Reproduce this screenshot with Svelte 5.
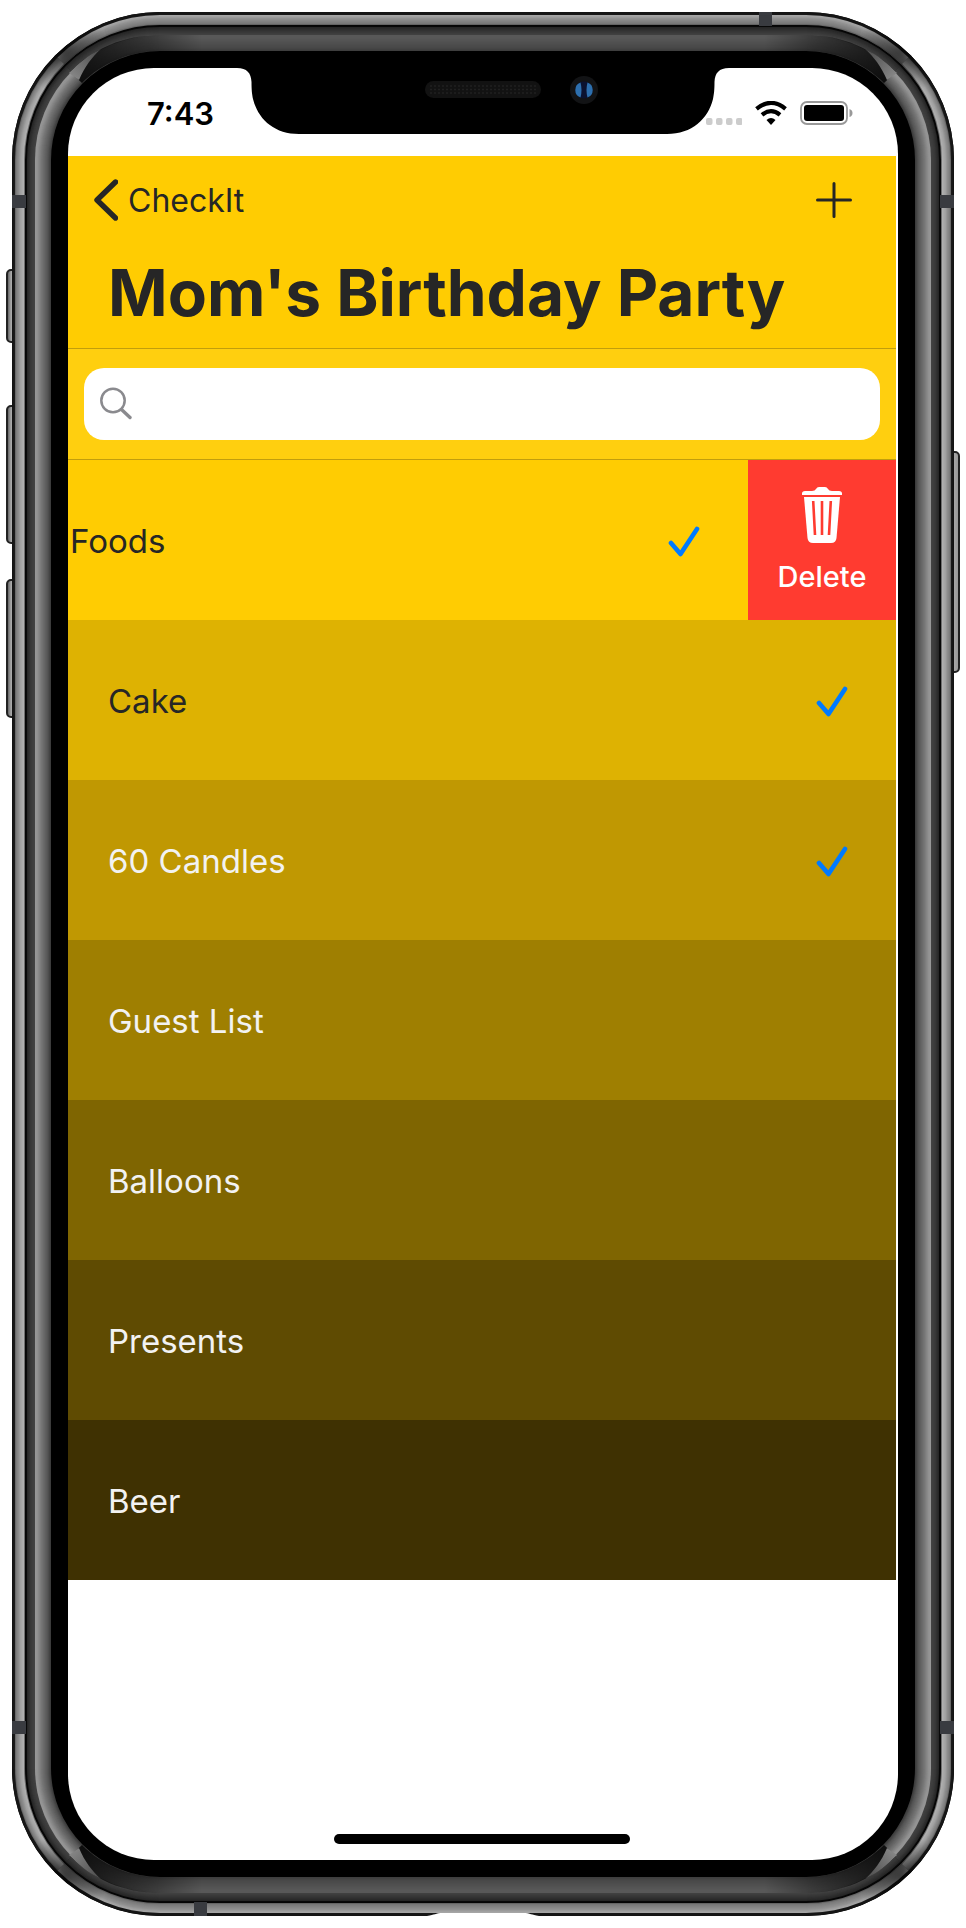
<script>
  let query = $state('');
  let items = $state([
    { name: 'Foods', done: true, swiped: true, color: '#ffcc02' },
    { name: 'Cake', done: true, color: '#deb202' },
    { name: '60 Candles', done: true, light: true, color: '#c09802' },
    { name: 'Guest List', done: false, light: true, color: '#9f7f01' },
    { name: 'Balloons', done: false, light: true, color: '#7f6501' },
    { name: 'Presents', done: false, light: true, color: '#5f4b02' },
    { name: 'Beer', done: false, light: true, color: '#3f3102' }
  ]);

  // Bezel layers from the outside in: [depth, side grey, top/bottom grey]
  const layers = [
    [0, 20, 20], [2, 26, 22], [3, 105, 165], [4, 125, 160], [6, 140, 145],
    [8, 160, 135], [11, 175, 120], [12, 110, 100], [13, 5, 5], [14, 8, 8],
    [15, 38, 38], [18, 55, 50], [22, 66, 64], [23, 150, 88], [25, 145, 88],
    [29, 118, 82], [35, 85, 72], [38, 60, 62], [39, 0, 0]
  ];
  const corners = ['tl', 'tr', 'bl', 'br'];

  function shade(depth, column) {
    let i = layers.length - 1;
    while (layers[i][0] > depth) i--;
    const from = layers[i];
    const to = layers[i + 1];
    if (!to) return from[column];
    const t = (depth - from[0]) / (to[0] - from[0]);
    return Math.round(from[column] + (to[column] - from[column]) * t);
  }

  const rings = Array.from({ length: 40 }, (_, depth) => {
    const side = shade(depth, 1);
    const end = shade(depth, 2);
    return { depth, side: `rgb(${side},${side},${side})`, end: `rgb(${end},${end},${end})` };
  });
</script>

<main class="stage">
  <div class="device">
    <i class="key key-mute"></i>
    <i class="key key-up"></i>
    <i class="key key-down"></i>
    <i class="key key-power"></i>
    <div class="bezel" aria-hidden="true">
      {#each rings as r}
        <i
          class="ring"
          style="inset:{r.depth}px;border-radius:{148 - r.depth}px;border-color:{r.end} {r.side}"
        ></i>
      {/each}
      {#each corners as corner}
        <svg class="corner {corner}" width="200" height="200" viewBox="0 0 200 200">
          <defs>
            <linearGradient id="fade-{corner}" gradientUnits="userSpaceOnUse" x1="70" y1="0" x2="190" y2="0">
              <stop offset="0" stop-color="#000" stop-opacity=".8" />
              <stop offset="1" stop-color="#000" stop-opacity="0" />
            </linearGradient>
            <radialGradient id="spot-{corner}">
              <stop offset="0" stop-color="#000" stop-opacity=".65" />
              <stop offset="1" stop-color="#000" stop-opacity="0" />
            </radialGradient>
            <linearGradient id="glint-{corner}" gradientUnits="userSpaceOnUse" x1="56" y1="66" x2="88" y2="37">
              <stop offset="0" stop-color="#8c8c8c" />
              <stop offset="1" stop-color="#4a4a4a" />
            </linearGradient>
            <clipPath id="rim-{corner}"><path d="M0 148A148 148 0 0 1 148 0V13A135 135 0 0 0 13 148Z" /></clipPath>
          </defs>
          <path d="M58 60C80 37 112 23 148 23H200V39H148C118 39 90 51 70 71Z" fill="url(#fade-{corner})" />
          <path d="M57 61C66 52 76 43 89 37C80 45 73 54 67 68Z" fill="url(#glint-{corner})" />
          <circle cx="52" cy="38" r="44" fill="url(#spot-{corner})" clip-path="url(#rim-{corner})" />
        </svg>
      {/each}
      <i class="gap side left upper"></i>
      <i class="gap side right upper"></i>
      <i class="gap side left lower"></i>
      <i class="gap side right lower"></i>
      <i class="gap end top"></i>
      <i class="gap end bottom"></i>
      <svg class="scoop" viewBox="0 0 112 3"><path d="M0 3C8 2 8 0 16 0H96C104 0 104 2 112 3Z" fill="#fff" /></svg>
    </div>

    <div class="screen">
      <svg class="notch" viewBox="0 0 486 66" aria-hidden="true">
        <path d="M-3 0C7 0 11 5 11.500 14C11.500 22 12 26 13 31C18 51 34 66 59 66H427C452 66 468 51 473 31C474 26 474.500 22 474.500 14C475 5 479 0 489 0Z" />
        <rect x="185" y="13" width="116" height="17" rx="8.500" fill="#121212" />
        <path d="M190 18H296M190 21.500H296M190 25H296" stroke="#202020" stroke-width="1.500" stroke-dasharray="2 2" />
        <circle cx="344" cy="22" r="14" fill="#121315" />
        <circle cx="344" cy="22" r="8.500" fill="#0b1230" />
        <path d="M340.500 14.500a8 8 0 0 0 0 15q2-7.500 0-15ZM347.500 14.500a8 8 0 0 1 0 15q-2-7.500 0-15Z" fill="#2d6fae" />
      </svg>

      <header class="status">
        <time>7:43</time>
        <div class="signals">
          <svg width="36" height="24" viewBox="0 0 36 24" aria-label="Signal">
            <g fill="#ccc">
              <rect y="17" width="6.500" height="7" rx="2" /><rect x="10" y="17" width="6.500" height="7" rx="2" />
              <rect x="20" y="17" width="6.500" height="7" rx="2" /><rect x="30" y="17" width="6.500" height="7" rx="2" />
            </g>
          </svg>
          <svg width="32" height="24" viewBox="0 0 32 24" aria-label="Wi-Fi">
            <path d="M1.500 7.800Q16-4 30.500 7.800M7 13.800Q16 6.500 25 13.800" fill="none" stroke="#000" stroke-width="4.200" />
            <path d="M11.500 19Q16 15.200 20.500 19L16 24Z" />
          </svg>
          <svg width="53" height="24" viewBox="0 0 53 24" aria-label="Battery">
            <rect x="1" y="1" width="46" height="22" rx="6" fill="none" stroke="#999" stroke-width="1.800" />
            <rect x="4" y="4" width="40" height="16" rx="3" />
            <path d="M49.500 8Q52.500 9 52.500 12T49.500 16Z" fill="#999" />
          </svg>
        </div>
      </header>

      <nav class="bar">
        <a class="back" href="#lists">
          <svg width="24" height="42" viewBox="0 0 24 42" aria-hidden="true"><path d="M21.500 3L3 21L21.500 39" fill="none" stroke="#262626" stroke-width="5.400" stroke-linecap="round" stroke-linejoin="round" /></svg>
          <span>CheckIt</span>
        </a>
        <button class="add" aria-label="Add item">
          <svg width="36" height="36" viewBox="0 0 36 36"><path d="M18 1.500V34.500M1.500 18H34.500" stroke="#262626" stroke-width="3" stroke-linecap="round" /></svg>
        </button>
      </nav>
      <h1>Mom's Birthday Party</h1>

      <div class="search">
        <label class="field">
          <svg width="32" height="34" viewBox="0 0 32 34" aria-hidden="true"><g fill="none" stroke="#8a8a8e"><circle cx="13" cy="13.500" r="11.700" stroke-width="2.500" /><path d="M21.500 22.500L30 30.500" stroke-width="3.400" stroke-linecap="round" /></g></svg>
          <input type="search" aria-label="Search" bind:value={query} />
        </label>
      </div>

      <ul>
        {#each items as item}
          <li class:swiped={item.swiped} class:light={item.light} style="background:{item.color}">
            <button class="item" aria-pressed={item.done} onclick={() => (item.done = !item.done)}>
              <span>{item.name}</span>
              {#if item.done}
                <svg width="32" height="32" viewBox="0 0 32 32" aria-hidden="true"><path d="M3 18L12.500 29L29 4" fill="none" stroke="#007aff" stroke-width="4.600" stroke-linecap="round" stroke-linejoin="round" /></svg>
              {/if}
            </button>
            {#if item.swiped}
              <button class="delete">
                <svg width="40" height="56" viewBox="0 0 40 56" aria-hidden="true">
                  <path d="M0 8V6.500Q0 4 3 4H10Q13 4 14 2Q15 0 17 0H23Q25 0 26 2Q27 4 30 4H37Q40 4 40 6.500V8Z" fill="#fff" />
                  <path d="M2 10H38L34.500 51Q34 56 29 56H11Q6 56 5.500 51Z" fill="#fff" />
                  <path d="M11.200 14L13 48M20 14V48M28.800 14L27 48" stroke="#ff3b30" stroke-width="2.600" />
                </svg>
                <span>Delete</span>
              </button>
            {/if}
          </li>
        {/each}
      </ul>

      <div class="home"></div>
    </div>
  </div>
</main>

<style>
  :global(body) { background: #fff; }
  * { box-sizing: border-box; }
  .stage {
    padding: 12px;
    font-family: Inter, Roboto, sans-serif;
    color: #262626;
  }
  .device {
    position: relative;
    display: flex;
    min-height: calc(100vh - 24px);
    padding: 56px;
  }
  .bezel { position: absolute; inset: 0; border-radius: 148px; background: #000; }
  .ring { position: absolute; border: 2px solid; }
  .corner { position: absolute; }
  .tl { top: 0; left: 0; }
  .tr { top: 0; right: 0; transform: scaleX(-1); }
  .bl { bottom: 0; left: 0; transform: scaleY(-1); }
  .br { bottom: 0; right: 0; transform: scale(-1); }
  .gap { position: absolute; background: #393b40; }
  .side { width: 14px; height: 13px; }
  .end { width: 13px; height: 14px; }
  .left { left: 0; }
  .right { right: 0; }
  .upper { top: 183px; }
  .lower { bottom: 182px; }
  .top { top: 0; right: 182px; }
  .bottom { bottom: 0; left: 182px; }
  .scoop { position: absolute; bottom: 0; left: 50%; width: 112px; height: 3px; transform: translateX(-50%); }
  .key {
    position: absolute;
    left: -6px;
    width: 12px;
    border: 2px solid #222;
    border-radius: 5px;
    background: linear-gradient(to right, #666, #aaa 40%, #999);
  }
  .key-mute { top: 257px; height: 74px; }
  .key-up { top: 393px; height: 139px; }
  .key-down { top: 567px; height: 139px; }
  .key-power { left: auto; right: -6px; top: 439px; height: 222px; }

  .screen {
    position: relative;
    flex: 1;
    min-width: 0;
    display: flex;
    flex-direction: column;
    padding-right: 2px;
    border-radius: 86px;
    overflow: hidden;
    background: #fff;
  }
  .notch {
    position: absolute;
    top: 0;
    left: 50%;
    width: 486px;
    height: 66px;
    transform: translateX(-50%);
    overflow: visible;
    z-index: 1;
  }
  .status {
    display: flex;
    justify-content: space-between;
    align-items: center;
    height: 88px;
    padding: 2px 43px 0 79px;
  }
  time { font-size: 31px; font-weight: 600; color: #000; }
  .signals { display: flex; gap: 13px; }
  .bar {
    display: flex;
    justify-content: space-between;
    align-items: center;
    height: 88px;
    padding: 0 44px 0 26px;
    background: #ffcc02;
  }
  button { font: inherit; color: inherit; border: 0; padding: 0; background: none; cursor: pointer; }
  svg { display: block; flex: none; }
  .back {
    display: flex;
    align-items: center;
    gap: 10px;
    font-size: 32px;
    color: inherit;
    text-decoration: none;
  }
  h1 {
    margin: 0;
    height: 105px;
    padding: 0 40px;
    border-bottom: 1px solid #c29e0c;
    background: #ffcc02;
    font-size: 64px;
    line-height: 98px;
    font-weight: 700;
    white-space: nowrap;
  }
  .search {
    padding: 19px 16px;
    border-bottom: 1px solid #c29e0c;
    background: #ffcf0f;
  }
  .field {
    display: flex;
    align-items: center;
    gap: 12px;
    height: 72px;
    padding: 0 16px;
    border-radius: 20px;
    background: #fff;
  }
  input {
    flex: 1;
    min-width: 0;
    border: 0;
    outline: 0;
    background: none;
    font: inherit;
    font-size: 32px;
  }
  ul { margin: 0; padding: 0; list-style: none; }
  li { display: flex; height: 160px; }
  .item {
    flex: 1;
    display: flex;
    justify-content: space-between;
    align-items: center;
    padding: 2px 48px 0 40px;
    font-size: 33px;
    text-align: left;
  }
  .swiped .item { padding-left: 2px; }
  .light { color: #f2f2f2; }
  .delete {
    display: flex;
    flex-direction: column;
    align-items: center;
    justify-content: center;
    gap: 16px;
    width: 148px;
    background: #ff3b30;
    color: #fff;
    font-size: 29px;
    font-weight: 500;
  }
  .home {
    width: 296px;
    height: 10px;
    margin: auto auto 16px;
    border-radius: 5px;
    background: #000;
  }
</style>
